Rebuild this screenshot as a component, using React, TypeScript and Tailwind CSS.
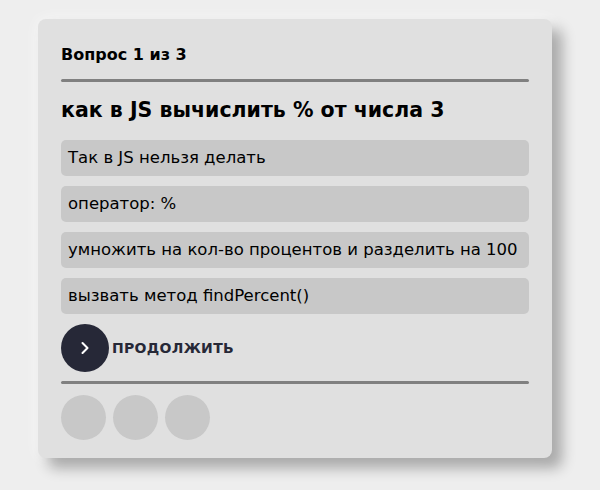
import { ChevronRight } from "lucide-react";

const answers = [
  "Так в JS нельзя делать",
  "оператор: %",
  "умножить на кол-во процентов и разделить на 100",
  "вызвать метод findPercent()",
];

export default function App() {
  return (
    <div
      className="min-h-screen bg-[#eeeeee] pl-[38px] pt-[19px]"
      style={{ fontFamily: '"DejaVu Sans", "Noto Sans", sans-serif' }}
    >
      <div className="w-[514px] h-[439px] bg-[#e0e0e0] rounded-lg px-[23px] pt-[26px] shadow-[10px_10px_14px_rgba(0,0,0,0.3),0_0_16px_rgba(255,255,255,0.6)]">
        <h2 className="text-[16px] font-bold text-black leading-5">Вопрос 1 из 3</h2>
        <hr className="mt-[14px] border-0 h-[3px] rounded-full bg-[#808080]" />
        <h1 className="mt-[16px] text-[20.5px] font-bold text-black leading-6">
          как в JS вычислить % от числа 3
        </h1>
        <div className="mt-[18px] flex flex-col gap-[10px]">
          {answers.map((a) => (
            <div
              key={a}
              className="h-[36px] flex items-center bg-[#c8c8c8] rounded-[5px] px-[7px] text-[16.5px] text-black whitespace-nowrap"
            >
              {a}
            </div>
          ))}
        </div>
        <div className="mt-[10px] flex items-center">
          <button className="w-[48px] h-[48px] rounded-full bg-[#262837] flex items-center justify-center">
            <ChevronRight className="text-white w-[20px] h-[20px]" strokeWidth={2.5} />
          </button>
          <span className="ml-[3px] text-[14px] font-bold text-[#262837] tracking-[0.3px]">ПРОДОЛЖИТЬ</span>
        </div>
        <hr className="mt-[9px] border-0 h-[3px] rounded-full bg-[#808080]" />
        <div className="mt-[11px] flex gap-[7px]">
          {[0, 1, 2].map((i) => (
            <div key={i} className="w-[45px] h-[45px] rounded-full bg-[#c8c8c8]" />
          ))}
        </div>
      </div>
    </div>
  );
}
